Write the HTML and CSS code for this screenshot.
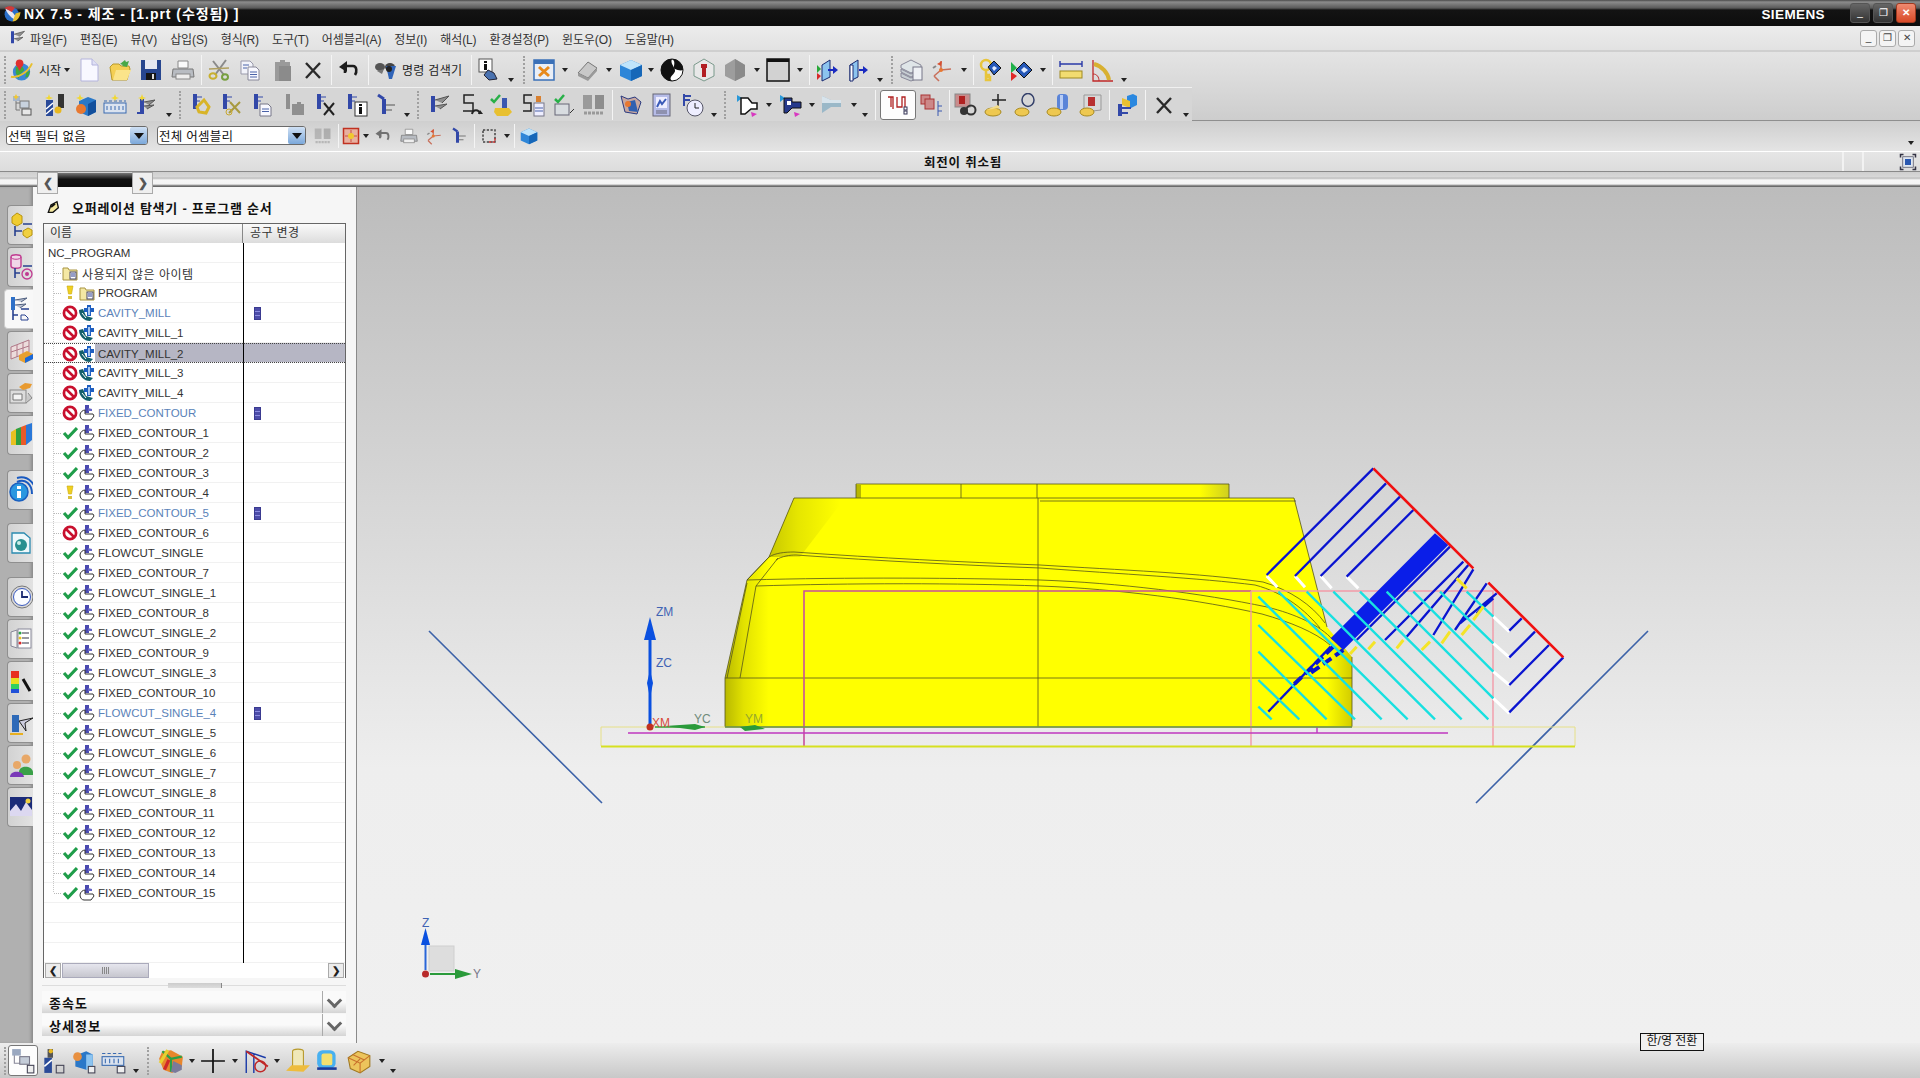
FILE: index.html
```html
<!DOCTYPE html>
<html lang="ko">
<head>
<meta charset="utf-8">
<title>NX 7.5 - 제조</title>
<link rel="stylesheet" href="styles.css">
</head>
<body>
<svg class="sprite" aria-hidden="true">
<symbol id="logo" viewBox="0 0 24 24"><circle cx="11" cy="13" r="9" fill="#2a6ec8"/><path d="M3 6c6 1 12 5 14 14-5-1-11-6-14-14z" fill="#e8e8f4"/><path d="M2 5c4-3 10-3 13 0l-4 5z" fill="#d03a3a"/><path d="M12 22c6 0 10-6 10-12l-6 2z" fill="#e8c030"/></symbol>
<symbol id="globe" viewBox="0 0 24 24"><circle cx="12" cy="14" r="9" fill="#3a86d8"/><path d="M6 9l6-2 3 5-4 4-2 5-3-6zM17 14l4-1-2 6-3 1z" fill="#3fa83f"/><path d="M1 19C8 21 19 14 23 5" fill="none" stroke="#e8c030" stroke-width="2"/><circle cx="10" cy="5" r="4" fill="#e03030"/><path d="M7 7l3 6 3-6z" fill="#e03030"/></symbol>
<symbol id="doc" viewBox="0 0 24 24"><path d="M4 1h11l6 6v16H4z" fill="#f8f8ff" stroke="#b4b4dc"/><path d="M15 1v6h6" fill="#dfe0f4" stroke="#b4b4dc"/></symbol>
<symbol id="folder" viewBox="0 0 24 24"><path d="M2 9l3-3h6l2 2h8l1 3-3 11H4z" fill="#f4cf54" stroke="#b89a2c"/><path d="M5 22l3-10h15l-4 10z" fill="#fbe48a"/><path d="M12 6l5-4 1 2 3-1-2 6-5-1 1-1z" fill="#48a848"/></symbol>
<symbol id="save" viewBox="0 0 24 24"><rect x="2" y="2" width="20" height="20" fill="#27468f"/><rect x="6" y="2" width="12" height="9" fill="#e6e8f2"/><rect x="7" y="15" width="10" height="7" fill="#151515"/><rect x="13" y="16" width="2" height="5" fill="#ddd"/></symbol>
<symbol id="print" viewBox="0 0 24 24"><path d="M7 3h10v7H7z" fill="#fafafa" stroke="#888"/><path d="M2 11h20l1 8H1z" fill="#b8bcc2" stroke="#777"/><rect x="5" y="16" width="14" height="5" fill="#eee" stroke="#888"/></symbol>
<symbol id="cut" viewBox="0 0 24 24"><path d="M19 2L8 17M6 3l11 14" stroke="#8a8a8a" stroke-width="2" fill="none"/><ellipse cx="6" cy="18" rx="3.5" ry="2.8" fill="none" stroke="#c8b030" stroke-width="2"/><ellipse cx="18" cy="19" rx="3" ry="2.8" fill="none" stroke="#78a040" stroke-width="2"/><path d="M2 11l20-1" stroke="#b0a060" stroke-width="1.4"/></symbol>
<symbol id="copy" viewBox="0 0 24 24"><path d="M3 3h9l3 3v10H3z" fill="#f2f3fa" stroke="#99a"/><path d="M10 9h8l3 3v10H10z" fill="#f8f8ff" stroke="#889"/><path d="M12 14h7M12 16.500h7M12 19h7M5 7h6M5 10h4" stroke="#4a62a8"/></symbol>
<symbol id="paste" viewBox="0 0 24 24"><path d="M5 4h5V2h5v2h5v19H5z" fill="#9a9a9a"/><rect x="9" y="8" width="12" height="15" fill="#8b8b8b"/></symbol>
<symbol id="x" viewBox="0 0 24 24"><path d="M5 5l14 15M19 5L5 20" stroke="#2a2a2a" stroke-width="2.400"/></symbol>
<symbol id="undo" viewBox="0 0 24 24"><path d="M8 18V11h8c4 0 4 6 2 9" transform="translate(0 -3)" fill="none" stroke="#1c1c1c" stroke-width="2.600"/><path d="M2 9l8-6v11z" fill="#1c1c1c"/></symbol>
<symbol id="binoc" viewBox="0 0 24 24"><ellipse cx="6" cy="9" rx="5" ry="4" fill="#555"/><ellipse cx="16" cy="9" rx="5" ry="4" fill="#444"/><path d="M12 8h10l-4 13h-3z" fill="#3064b8"/><circle cx="15" cy="11" r="3" fill="#222"/><path d="M3 13l5 3 2-5z" fill="#777"/></symbol>
<symbol id="info" viewBox="0 0 24 24"><rect x="3" y="1" width="13" height="13" fill="#fff" stroke="#555"/><rect x="8" y="3" width="3" height="2" fill="#111"/><rect x="8" y="6" width="3" height="6" fill="#111"/><path d="M12 12l6 3 3 6-8 1-5-5z" fill="#4a72b0" stroke="#223"/></symbol>
<symbol id="sheet" viewBox="0 0 24 24"><rect x="2" y="2" width="20" height="20" fill="#e9eef6" stroke="#3a70b8" stroke-width="1.500"/><rect x="2" y="2" width="20" height="4" fill="#3a70b8"/><path d="M7 9l10 9M17 9L7 18" stroke="#e88a1c" stroke-width="3"/></symbol>
<symbol id="snap" viewBox="0 0 24 24"><rect x="2" y="2" width="20" height="20" fill="#e8b0a0" stroke="#c03020" stroke-width="2"/><path d="M12 4v16M4 12h16" stroke="#c03020"/><circle cx="12" cy="12" r="4" fill="#f0c830"/></symbol>
<symbol id="dsel" viewBox="0 0 24 24"><rect x="4" y="4" width="16" height="16" fill="none" stroke="#444" stroke-width="2" stroke-dasharray="3 2"/><path d="M12 20h8v-6" fill="none" stroke="#c83030" stroke-width="2" stroke-dasharray="3 2"/></symbol>
<symbol id="fit" viewBox="0 0 24 24"><path d="M2 6V2h4M18 2h4v4M2 18v4h4M18 22h4v-4" fill="none" stroke="#334" stroke-width="2"/><rect x="5" y="5" width="14" height="14" fill="#dfe6f0" stroke="#556"/><rect x="8" y="8" width="8" height="8" fill="#2a58b0"/></symbol>
<symbol id="plane" viewBox="0 0 24 24"><path d="M3 15L13 4l9 6-9 10z" fill="#c8c8c8" stroke="#777"/><path d="M3 15l10 5 9-10v3L13 23 3 18z" fill="#9a9a9a"/></symbol>
<symbol id="cube" viewBox="0 0 24 24"><path d="M1 7l11-5 11 5v11l-11 5-11-5z" fill="#2e86d8"/><path d="M1 7l11-5 11 5-11 5z" fill="#bfe4fb"/><path d="M12 12v11l11-5V7z" fill="#1667b8"/></symbol>
<symbol id="shade" viewBox="0 0 24 24"><circle cx="12" cy="12" r="11" fill="#fff" stroke="#111"/><path d="M12 1a11 11 0 0 0 0 22c-5-4 4-7 3-11s-5-7-3-11zM12 1c5 3 0 8 3 10 2 1 6 2 8 1A11 11 0 0 0 12 1z" fill="#111"/></symbol>
<symbol id="hexr" viewBox="0 0 24 24"><path d="M12 1l10 6v11l-10 5-10-5V7z" fill="#e8e8e8" stroke="#7b9a8c"/><path d="M9 6h6v4h-1v9h-4v-9H9z" fill="#b21f24"/></symbol>
<symbol id="hexg" viewBox="0 0 24 24"><path d="M12 1l10 6v11l-10 5-10-5V7z" fill="#9d9d9d"/><path d="M12 1v22l10-5V7z" fill="#8a8a8a"/></symbol>
<symbol id="rect" viewBox="0 0 24 24"><rect x="1" y="1" width="22" height="22" fill="#d2d2d2" stroke="#111" stroke-width="1.500"/><rect x="1" y="1" width="22" height="3" fill="#111"/></symbol>
<symbol id="pin" viewBox="0 0 24 24"><path d="M7 7l8-5v17l-8 4z" fill="#8cc4ef" stroke="#1a2a70"/><path d="M2 7l4 4-4 4z" fill="#28a838"/><path d="M2 15l4 3-4 4z" fill="#d82828"/><path d="M13 12h6" stroke="#1a2ac0" stroke-width="2"/><path d="M18 8l5 4-5 4z" fill="#1a2ac0"/></symbol>
<symbol id="pout" viewBox="0 0 24 24"><path d="M4 7l8-5v17l-8 4z" fill="#8cc4ef" stroke="#1a2a70"/><path d="M4 7h3v16H4z" fill="#fff" stroke="#1a2a70"/><path d="M13 12h5" stroke="#1a2ac0" stroke-width="2"/><path d="M17 8l5 4-5 4z" fill="#1a2ac0"/></symbol>
<symbol id="stack" viewBox="0 0 24 24"><path d="M2 7l10-5 10 5v3L12 15 2 10z" fill="#dfe5e8" stroke="#889"/><path d="M2 11l10 5 10-5v3l-10 5-10-5zM2 15l10 5 10-5v4l-10 4-10-4z" fill="#c8cfd4" stroke="#889"/><rect x="14" y="9" width="9" height="13" fill="#eef0f4" stroke="#778"/></symbol>
<symbol id="axes" viewBox="0 0 24 24"><path d="M11 12v-9M11 12l10-1M11 12l-7 6M4 18l5 5" stroke="#c8705c" stroke-width="1.600" fill="none"/><circle cx="11" cy="12" r="2" fill="#e87830"/><path d="M7 6l5-3-1 5z" fill="#d85030"/><path d="M3 10l3-2" stroke="#888" stroke-width="2"/></symbol>
<symbol id="key" viewBox="0 0 24 24"><circle cx="8" cy="7" r="5" fill="none" stroke="#e8c53c" stroke-width="2.500"/><path d="M8 12v10h4v-3h-2v-2h2" fill="none" stroke="#e8c53c" stroke-width="2.500"/><path d="M10 9l6-6 7 7-7 7z" fill="#2558b8" stroke="#111"/><path d="M14 10l2-2 3 2-3 3z" fill="#dfeaff"/></symbol>
<symbol id="diam" viewBox="0 0 24 24"><path d="M2 4l6 6-6 5z" fill="#1fb048"/><path d="M2 14l6 4-6 5z" fill="#e02828"/><path d="M7 12l8-8 8 8-8 8z" fill="#2558b8" stroke="#111"/><path d="M12 12l3-3 4 3-4 3z" fill="#dfeaff"/></symbol>
<symbol id="ruler" viewBox="0 0 24 24"><rect x="1" y="13" width="22" height="7" fill="#f2dc70" stroke="#a08a20"/><path d="M1 6h22M1 3v6M23 3v6" stroke="#2a3aa8" stroke-width="1.400" fill="none"/></symbol>
<symbol id="angle" viewBox="0 0 24 24"><path d="M3 2v21h20" fill="none" stroke="#c02828" stroke-width="1.300"/><path d="M4 6c8 2 14 9 15 16" fill="none" stroke="#d8b030" stroke-width="4"/><path d="M3 16c4 0 6 3 6 7" fill="none" stroke="#c02828"/></symbol>
<symbol id="treea" viewBox="0 0 24 24"><path d="M6 5v12h4M10 10H6" stroke="#777" fill="none"/><rect x="3" y="3" width="7" height="5" fill="#a6b6cc"/><rect x="10" y="8" width="9" height="7" fill="#c8d2de" stroke="#777"/><rect x="12" y="16" width="9" height="6" fill="#e8e8e8" stroke="#555"/><path d="M6 1l1 2 2 1-2 1-1 2-1-2-2-1 2-1z" fill="#f2c830"/></symbol>
<symbol id="mill" viewBox="0 0 24 24"><path d="M4 7h7v16H4z" fill="#2a4a98"/><path d="M4 16l7-6M4 21l7-6" stroke="#fff" stroke-width="1.500"/><path d="M16 1h6v14h-6z" fill="#333"/><circle cx="16" cy="17" r="3.500" fill="#e8b820"/><path d="M7 1l1 3 3 1-3 1-1 1-1-1-3-1 3-1z" fill="#f2d830"/></symbol>
<symbol id="bcube" viewBox="0 0 24 24"><path d="M6 8l9-4 8 3v12l-8 4-9-4z" fill="#2a78c8"/><path d="M15 11v12l8-4V7z" fill="#124f9c"/><circle cx="8" cy="16" r="5" fill="#e87830"/><path d="M7 1l1 3 3 1-3 1-1 2-1-2-3-1 3-1z" fill="#f2d830"/></symbol>
<symbol id="fixt" viewBox="0 0 24 24"><rect x="1" y="10" width="22" height="10" fill="#dbe3ef" stroke="#3a6ab0"/><path d="M4 13v4M8 13v4M12 13v4M16 13v4M20 13v4" stroke="#3a6ab0"/><path d="M1 8h22" stroke="#3a6ab0" stroke-dasharray="3 2"/><path d="M12 1l1 3 3 1-3 1-1 2-1-2-3-1 3-1z" fill="#f2d830"/></symbol>
<symbol id="ops" viewBox="0 0 24 24"><rect x="6" y="6" width="4" height="14" fill="#3248a8"/><path d="M10 9l11-2-6 5M10 13l10-1-7 4" fill="#8b8b8b" stroke="#555"/><path d="M8 1l1 3 3 1-3 1-1 2-1-2-3-1 3-1z" fill="#f2d830"/><path d="M3 20h7" stroke="#3248a8" stroke-width="2"/></symbol>
<symbol id="opb" viewBox="0 0 24 24"><rect x="4" y="1" width="4" height="15" fill="#3248a8"/><path d="M8 4h5M8 8h3" stroke="#3248a8"/></symbol>
<symbol id="opa" viewBox="0 0 24 24"><use href="#opb"/><path d="M15 7l5 7-3 6-7-1-2-5z" fill="none" stroke="#d8b428" stroke-width="3"/></symbol>
<symbol id="opc" viewBox="0 0 24 24"><use href="#opb"/><path d="M10 20L21 9M11 9l10 11" stroke="#a89a40" stroke-width="2"/><circle cx="10" cy="19" r="3" fill="none" stroke="#c8a830"/></symbol>
<symbol id="opd" viewBox="0 0 24 24"><use href="#opb"/><path d="M10 11h8l3 3v9H10z" fill="#f8f8ff" stroke="#778"/><path d="M12 16h7M12 18.500h7" stroke="#4a62a8"/></symbol>
<symbol id="ope" viewBox="0 0 24 24"><rect x="4" y="1" width="4" height="15" fill="#8f8f8f"/><path d="M10 11h5v-2h4v2h3v11H10z" fill="#8f8f8f"/></symbol>
<symbol id="opf" viewBox="0 0 24 24"><use href="#opb"/><path d="M11 10l10 12M21 10L11 22" stroke="#222" stroke-width="2"/></symbol>
<symbol id="opg" viewBox="0 0 24 24"><use href="#opb"/><rect x="11" y="9" width="12" height="14" fill="#fff" stroke="#333"/><rect x="15" y="11" width="3" height="2" fill="#111"/><rect x="15" y="14" width="3" height="7" fill="#111"/></symbol>
<symbol id="oph" viewBox="0 0 24 24"><path d="M4 2l6 4" stroke="#3248a8" stroke-width="3"/><rect x="8" y="6" width="4" height="15" fill="#3248a8"/><path d="M12 12h9M12 17h6" stroke="#555"/></symbol>
<symbol id="opi" viewBox="0 0 24 24"><rect x="4" y="3" width="4" height="16" fill="#3248a8"/><path d="M8 7l14-4-7 7M8 13l12-2-7 5" fill="#8f8f8f" stroke="#555"/></symbol>
<symbol id="sarr" viewBox="0 0 24 24"><path d="M15 2H5v8h9v8H4" fill="none" stroke="#222" stroke-width="1.500"/><path d="M13 21c1-5 7-5 8 0" fill="none" stroke="#222" stroke-width="2"/><path d="M19 21h5l-3-4z" fill="#222"/></symbol>
<symbol id="chk" viewBox="0 0 24 24"><path d="M1 6l3 3 6-7" fill="none" stroke="#28b048" stroke-width="2.500"/><rect x="12" y="5" width="5" height="15" fill="#3a58b0"/><path d="M5 15h14l3 4-4 4H7l-3-4z" fill="#e8c030"/></symbol>
<symbol id="sdoc" viewBox="0 0 24 24"><path d="M11 2H3v8h7v8H2" fill="none" stroke="#222" stroke-width="1.500"/><rect x="13" y="10" width="10" height="13" fill="#eef" stroke="#778"/><path d="M14 15h8M14 18h8" stroke="#4a62a8"/><rect x="15" y="3" width="5" height="6" fill="#d88030"/></symbol>
<symbol id="cdoc" viewBox="0 0 24 24"><path d="M3 6l3 3 6-7" fill="none" stroke="#28b048" stroke-width="2.500"/><rect x="3" y="11" width="14" height="11" fill="#d8dce0" stroke="#667"/><path d="M18 20l4-4" stroke="#333"/></symbol>
<symbol id="gdoc" viewBox="0 0 24 24"><rect x="1" y="2" width="9" height="14" fill="#9a9a9a"/><rect x="13" y="2" width="9" height="14" fill="#8d8d8d"/><path d="M2 20h20" stroke="#999" stroke-width="3" stroke-dasharray="3 1"/></symbol>
<symbol id="cubes" viewBox="0 0 24 24"><path d="M2 3l7 3 7-2 6 5-4 12-12-2z" fill="#c8a8a0" stroke="#2a3a80"/><path d="M8 9l8-2 3 12-9-1z" fill="#3060b0"/><circle cx="9" cy="11" r="3" fill="#e87830"/></symbol>
<symbol id="report" viewBox="0 0 24 24"><rect x="3" y="1" width="17" height="22" fill="#b6bce8" stroke="#667"/><rect x="6" y="4" width="11" height="11" fill="#eef"/><path d="M7 14l3-6 2 3 4-5" stroke="#3a5ab8" stroke-width="2" fill="none"/><path d="M6 18h11M6 20h11" stroke="#667"/></symbol>
<symbol id="opclk" viewBox="0 0 24 24"><path d="M3 1v12M3 3h7M3 7h6" stroke="#3248a8" stroke-width="2"/><circle cx="14" cy="15" r="8" fill="#eef" stroke="#556"/><path d="M14 10v5h4" stroke="#222" fill="none"/></symbol>
<symbol id="tl1" viewBox="0 0 24 24"><path d="M1 2l5 3-5 4z" fill="#2a98d8"/><path d="M5 5h7l4 5h5v6h-6l-6 5H5z" fill="#fff" stroke="#111" stroke-width="1.500"/><path d="M15 19l6 2-5 3z" fill="#d838c0"/></symbol>
<symbol id="tl2" viewBox="0 0 24 24"><path d="M1 2l5 3-5 4z" fill="#2a98d8"/><path d="M5 5h8v4h9v6h-9l-5 5H5z" fill="#263a8c" stroke="#111"/><path d="M8 8h4v4H8z" fill="#fff"/><path d="M15 19l6 2-5 3z" fill="#d838c0"/></symbol>
<symbol id="tl3" viewBox="0 0 24 24"><path d="M2 3l9 4h10v7H11l-9 6z" fill="#9ab8c8"/><path d="M2 3l9 4h10v3H2z" fill="#d8e4ec"/></symbol>
<symbol id="seq" viewBox="0 0 24 24"><path d="M2 4h5v12M5 4v10M11 4v10h5V4h3v10" fill="none" stroke="#b02020" stroke-width="1.300"/><rect x="18" y="14" width="3" height="3" fill="none" stroke="#335"/><rect x="18" y="18" width="3" height="3" fill="none" stroke="#335"/></symbol>
<symbol id="seq2" viewBox="0 0 24 24"><rect x="1" y="2" width="9" height="9" fill="#c88" stroke="#a33"/><rect x="5" y="6" width="9" height="10" fill="#c88" stroke="#a33"/><path d="M18 8v15M18 13h4M18 18h4" stroke="#3a58b0"/></symbol>
<symbol id="mach" viewBox="0 0 24 24"><rect x="2" y="1" width="15" height="13" fill="#c88c8c" stroke="#888"/><rect x="6" y="3" width="6" height="8" fill="#b02020"/><circle cx="11" cy="18" r="4" fill="#333"/><circle cx="18" cy="17" r="4.500" fill="none" stroke="#333" stroke-width="2"/></symbol>
<symbol id="plus" viewBox="0 0 24 24"><path d="M14 1v12M8 7h14" stroke="#222" stroke-width="1.500"/><ellipse cx="9" cy="19" rx="8" ry="4" fill="#eec850" stroke="#a88a20"/><path d="M2 17l12-5 2 3" fill="#f4dc88"/></symbol>
<symbol id="ring" viewBox="0 0 24 24"><ellipse cx="14" cy="7" rx="6" ry="6.500" fill="none" stroke="#34406a" stroke-width="1.500"/><ellipse cx="8" cy="19" rx="7" ry="4" fill="#eec850" stroke="#a88a20"/></symbol>
<symbol id="cyl" viewBox="0 0 24 24"><rect x="11" y="1" width="11" height="16" rx="4" fill="#5a84d8"/><rect x="14" y="2" width="3" height="14" fill="#b8ccf4"/><ellipse cx="8" cy="19" rx="7" ry="4" fill="#eec850" stroke="#a88a20"/></symbol>
<symbol id="cbox" viewBox="0 0 24 24"><path d="M5 2h17v15l-17 2z" fill="#d8d8d8" stroke="#999"/><rect x="9" y="4" width="7" height="9" fill="#b83030"/><ellipse cx="8" cy="19" rx="7" ry="4" fill="#eec850" stroke="#a88a20"/></symbol>
<symbol id="opcube" viewBox="0 0 24 24"><path d="M13 3l6-2 4 2v9l-6 3-4-3z" fill="#2a88e0"/><path d="M8 5l8 3v7l-8-3z" fill="#e8c030"/><rect x="4" y="11" width="4" height="12" fill="#3248a8"/><path d="M8 15h9M8 20h6" stroke="#3248a8" stroke-width="2"/></symbol>
<symbol id="mult" viewBox="0 0 24 24"><path d="M1 10l3-7 8-1 11 6-1 9-9 6-8-3z" fill="#e8862c"/><path d="M4 3l8 7v12M12 10l10-2" stroke="#2aa048" stroke-width="2" fill="none"/><path d="M6 20l4-9" stroke="#d02828" stroke-width="3"/><path d="M14 12l8 4v4l-6 3-4-1z" fill="#7a7a9a"/><path d="M2 14l7-12" stroke="#e8d030" stroke-width="3"/></symbol>
<symbol id="cross" viewBox="0 0 24 24"><path d="M12 1v22M1 12h22" stroke="#111" stroke-width="1.600"/></symbol>
<symbol id="poly" viewBox="0 0 24 24"><path d="M3 23V3l18 6M10 23V6" fill="none" stroke="#1a3aa8" stroke-width="1.300"/><path d="M3 3l20 14" stroke="#c02828" stroke-width="1.600"/><circle cx="16" cy="17" r="5" fill="none" stroke="#c02828" stroke-width="1.400"/></symbol>
<symbol id="cylb" viewBox="0 0 24 24"><path d="M7 3a5 2 0 0 1 10 0v14H7z" fill="#f0e8b8" stroke="#b89a2c"/><path d="M1 21l5-5h17l-6 6z" fill="#eebc3c"/></symbol>
<symbol id="cubeb" viewBox="0 0 24 24"><rect x="2" y="2" width="17" height="17" rx="5" fill="#48b0f0"/><rect x="6" y="5" width="10" height="11" rx="2" fill="#f4e070"/><path d="M2 19h18" stroke="#1a3a98" stroke-width="2.400"/></symbol>
<symbol id="wire" viewBox="0 0 24 24"><path d="M2 9l9-6 11 4v10l-9 6-9-4z" fill="#ecc45c" stroke="#a07820"/><path d="M2 9l11 5 9-7M13 14v9M6 6l11 5M7 16l6-6" stroke="#c8702c" fill="none"/></symbol>
<symbol id="tree2" viewBox="0 0 24 24"><path d="M4 6v8h8" stroke="#889" fill="none"/><rect x="2" y="1" width="8" height="6" fill="#9aa8c0"/><rect x="9" y="8" width="9" height="7" fill="#c4ccd8" stroke="#778"/><rect x="16" y="16" width="6" height="7" fill="#eee" stroke="#445"/></symbol>
<symbol id="mill2" viewBox="0 0 24 24"><path d="M4 9h7v14H4z" fill="#2a4a98"/><path d="M4 17l7-6" stroke="#fff" stroke-width="1.500"/><rect x="7" y="1" width="5" height="8" fill="#555"/><circle cx="10" cy="3" r="2" fill="#e8b820"/><rect x="15" y="16" width="7" height="7" fill="none" stroke="#445"/></symbol>
<symbol id="cube2" viewBox="0 0 24 24"><path d="M4 7l10-4 6 3v11l-6 3-10-3z" fill="#2a78c8"/><path d="M14 6v14l6-3V6z" fill="#8cc4f0"/><circle cx="6" cy="8" r="4" fill="#e89040"/><rect x="16" y="17" width="6" height="6" fill="#eee" stroke="#445"/></symbol>
<symbol id="fix2" viewBox="0 0 24 24"><rect x="1" y="8" width="20" height="8" fill="#dbe3ef" stroke="#3a6ab0"/><path d="M4 10v4M8 10v4M12 10v4M16 10v4" stroke="#3a6ab0"/><path d="M1 5h20" stroke="#3a6ab0" stroke-dasharray="3 2"/><rect x="15" y="17" width="7" height="6" fill="#eee" stroke="#445"/></symbol>
<symbol id="t1" viewBox="0 0 24 28"><path d="M3 6l5-4 5 3v7l-5 3-5-3z" fill="#f0cc30" stroke="#b89410"/><path d="M6 15v10M6 20h7M14 13h9" stroke="#27408f" stroke-width="1.600" fill="none"/><path d="M14 20l5-3 4 2v5l-5 3-4-3z" fill="#f0d040" stroke="#b89410"/></symbol>
<symbol id="t2" viewBox="0 0 24 28"><path d="M2 4c0-3 10-3 10 0v9c0 3-10 3-10 0z" fill="#f0d8e8" stroke="#c03a90" stroke-width="1.400"/><path d="M2 4c0 3 10 3 10 0" fill="none" stroke="#c03a90"/><path d="M6 15v10M6 20h5M14 13h9" stroke="#27408f" stroke-width="1.600" fill="none"/><circle cx="18" cy="21" r="5" fill="none" stroke="#c03a90" stroke-width="1.300"/><circle cx="18" cy="21" r="2" fill="#c03a90"/></symbol>
<symbol id="t2b" viewBox="0 0 24 28"><rect x="4" y="2" width="4" height="13" fill="#2e70c8"/><path d="M8 5l12-2-6 4M8 10l11-1-6 4" fill="#b8c0d0" stroke="#506080"/><path d="M6 15v10M6 20h5M14 14h8" stroke="#27408f" stroke-width="1.600" fill="none"/><path d="M14 25v-5h4l3 3v2z" fill="none" stroke="#27408f"/></symbol>
<symbol id="t3" viewBox="0 0 24 28"><path d="M2 10L20 3v12L2 22z" fill="#ecdcdc" stroke="#b07888"/><path d="M8 8v12M14 5v12M2 15l18-6" stroke="#b07888"/><path d="M10 18l8-4 6 3v5l-8 4-6-3z" fill="#e8a030"/><path d="M16 21l8-4v5l-8 4z" fill="#1a68d8"/></symbol>
<symbol id="t3b" viewBox="0 0 24 28"><rect x="1" y="11" width="16" height="13" fill="#dcdcdc" stroke="#888"/><path d="M4 15h9v6H4z" fill="#f4f4f4" stroke="#777"/><path d="M17 24l6-5-4-5" fill="#c8c8c8" stroke="#888"/><path d="M10 8l6-4 7 1-2 4-7 2z" fill="#e89a30"/></symbol>
<symbol id="t4" viewBox="0 0 24 28"><path d="M2 11l5-3v16H2z" fill="#e8c020"/><path d="M7 8l5-2v18H7z" fill="#30a040"/><path d="M12 6l5-2v20h-5z" fill="#e85a28"/><path d="M17 4l6-2v17l-6 5z" fill="#2a78d8"/></symbol>
<symbol id="t5" viewBox="0 0 24 28"><path d="M8 6c8-4 15 2 15 12" fill="none" stroke="#1a5ac0" stroke-width="2"/><path d="M8 2c11-3 20 6 19 18" fill="none" stroke="#1a5ac0" stroke-width="2"/><circle cx="10" cy="16" r="9" fill="#2a98e0" stroke="#1a60c0" stroke-width="1.500"/><rect x="8" y="15" width="4" height="7" fill="#fff"/><rect x="8" y="10" width="4" height="3" fill="#fff"/></symbol>
<symbol id="t6" viewBox="0 0 24 28"><path d="M3 4h12l6 5v15H3z" fill="#eef8fb" stroke="#2a8ab0" stroke-width="1.300"/><circle cx="12" cy="16" r="6" fill="#2a9090"/><circle cx="10" cy="14" r="2" fill="#c8eee8"/></symbol>
<symbol id="t7" viewBox="0 0 24 24"><circle cx="13" cy="12" r="11" fill="#d8d8d8" stroke="#777"/><circle cx="13" cy="12" r="8.500" fill="#fafcff" stroke="#3a5ac0"/><path d="M13 6v6h6" stroke="#1a2a70" stroke-width="1.800" fill="none"/></symbol>
<symbol id="t8" viewBox="0 0 24 24"><path d="M2 5l6-2v18l-6-2z" fill="#eee" stroke="#889"/><rect x="9" y="2" width="13" height="19" fill="#fff" stroke="#889"/><path d="M13 6h7M13 11h7M13 16h7" stroke="#334"/><circle cx="11" cy="6" r="1.500" fill="#28a048"/><circle cx="11" cy="11" r="1.500" fill="#e8c020"/><circle cx="11" cy="16" r="1.500" fill="#d82828"/></symbol>
<symbol id="t9" viewBox="0 0 24 28"><rect x="2" y="4" width="8" height="7" fill="#e83020"/><rect x="2" y="11" width="8" height="6" fill="#e8e020"/><rect x="2" y="17" width="8" height="5" fill="#30d060"/><rect x="2" y="22" width="8" height="4" fill="#2050d8"/><path d="M14 12l7 12" stroke="#111" stroke-width="3"/></symbol>
<symbol id="t10" viewBox="0 0 24 28"><path d="M3 6h7v17H3z" fill="#2e6ab8"/><path d="M1 25h13" stroke="#e8b020" stroke-width="2"/><path d="M10 12l14-3-8 5 1 8z" fill="#ccd" stroke="#222"/></symbol>
<symbol id="t11" viewBox="0 0 24 28"><circle cx="17" cy="8" r="4.500" fill="#e8a868"/><path d="M10 21c0-7 13-7 14 0v3H10z" fill="#3aa048"/><circle cx="8" cy="14" r="4" fill="#e8a868"/><path d="M1 26c0-7 13-7 14 0z" fill="#7a3ab8"/></symbol>
<symbol id="t12" viewBox="0 0 24 28"><rect x="1" y="4" width="22" height="19" fill="#1a2a78"/><path d="M1 18l6-7 5 7 5-9 6 8v6H1z" fill="#dcd8f0"/><circle cx="19" cy="8" r="2.500" fill="#f0d040"/></symbol>
<symbol id="picon" viewBox="0 0 24 24"><path d="M5 20l4-11 9-5 2 9-8 7z" fill="#f4e8a0" stroke="#111" stroke-width="2"/><path d="M9 12l6-5" stroke="#111" stroke-width="3"/></symbol>
<symbol id="no" viewBox="0 0 16 16"><circle cx="8" cy="8" r="6.100" fill="#fff" stroke="#c8102e" stroke-width="2.700"/><path d="M4 4l8 8" stroke="#c8102e" stroke-width="2.500"/></symbol>
<symbol id="ok" viewBox="0 0 16 16"><path d="M2 8l4 4.500L15 3" fill="none" stroke="#1f9d4a" stroke-width="3.200"/></symbol>
<symbol id="bulb" viewBox="0 0 16 16"><path d="M5 1h6l-1.500 8h-3z" fill="#f0d020" stroke="#c8a810" stroke-width=".6"/><rect x="6" y="11" width="4" height="3" fill="#d8c040"/></symbol>
<symbol id="fld" viewBox="0 0 16 16"><path d="M1 5V3h5l1 2h8v10H1z" fill="#f4e8a4" stroke="#a89440"/><rect x="8" y="7" width="6" height="7" fill="#fff" stroke="#446"/><path d="M9 9h4M9 11h4" stroke="#2a3a90"/></symbol>
<symbol id="cav" viewBox="0 0 16 16"><path d="M0 5c0 6 5 11 11 11l3-3-7-2-3-7z" fill="#14606a"/><path d="M5 3h3V0h4v3h3v4h-3v4H8V7H5z" fill="#1f5fc0"/><path d="M9 2h2v8H9z" fill="#a8c8f0"/><path d="M3 8l4 5" stroke="#fff"/></symbol>
<symbol id="fix" viewBox="0 0 16 16"><rect x="6" y="0" width="4" height="8" fill="#4a4ab0"/><path d="M9 3l4 1v2H9z" fill="#6868c8"/><path d="M1 10c0-3 3-5 5-5v4h8l1 2-3 4H5c-2 0-4-2-4-5z" fill="#fff" stroke="#333"/></symbol>
</svg>

<div class="app">
  <header class="titlebar">
    <svg class="tlogo"><use href="#logo"/></svg>
    <span class="ttext">NX 7.5 - 제조 - [1.prt (수정됨) ]</span>
    <span class="siemens">SIEMENS</span>
    <div class="winbtns"><span class="wb">_</span><span class="wb">❐</span><span class="wb wbclose">✕</span></div>
  </header>

  <nav class="menubar">
    <svg class="mlogo"><use href="#opi"/></svg>
    <span>파일(F)</span><span>편집(E)</span><span>뷰(V)</span><span>삽입(S)</span><span>형식(R)</span><span>도구(T)</span><span>어셈블리(A)</span><span>정보(I)</span><span>해석(L)</span><span>환경설정(P)</span><span>윈도우(O)</span><span>도움말(H)</span>
    <div class="mdibtns"><span class="mb">_</span><span class="mb">❐</span><span class="mb">✕</span></div>
  </nav>

  <div class="tools">
    <div class="tbar tbar1">
      <i class="dots w10"></i>
      <i class="ti w23"><svg><use href="#globe"/></svg></i>
      <span class="tlabel start w28">시작</span><i class="ar w12"></i>
      <i class="ti w31"><svg><use href="#doc"/></svg></i>
      <i class="ti w31"><svg><use href="#folder"/></svg></i>
      <i class="ti w32"><svg><use href="#save"/></svg></i>
      <i class="ti w32"><svg><use href="#print"/></svg></i>
      <i class="sep w4"></i>
      <i class="ti w31"><svg><use href="#cut"/></svg></i>
      <i class="ti w32"><svg><use href="#copy"/></svg></i>
      <i class="ti w31"><svg><use href="#paste"/></svg></i>
      <i class="ti w31"><svg><use href="#x"/></svg></i>
      <i class="sep w5"></i>
      <i class="ti w32"><svg><use href="#undo"/></svg></i>
      <i class="sep w5"></i>
      <i class="ti w32"><svg><use href="#binoc"/></svg></i>
      <span class="tlabel w66">명령 검색기</span>
      <i class="sep w5"></i>
      <i class="ti w30"><svg><use href="#info"/></svg></i><i class="ar low w16"></i>
      <i class="dots w12"></i>
      <i class="ti w26"><svg><use href="#sheet"/></svg></i><i class="ar w15"></i>
      <i class="ti w30"><svg><use href="#plane"/></svg></i><i class="ar w14"></i>
      <i class="ti w30"><svg><use href="#cube"/></svg></i><i class="ar w10"></i>
      <i class="ti w32"><svg><use href="#shade"/></svg></i>
      <i class="ti w31"><svg><use href="#hexr"/></svg></i>
      <i class="ti w32"><svg><use href="#hexg"/></svg></i><i class="ar w12"></i>
      <i class="ti w30"><svg><use href="#rect"/></svg></i><i class="ar w14"></i>
      <i class="sep w4"></i>
      <i class="ti w32"><svg><use href="#pin"/></svg></i>
      <i class="ti w30"><svg><use href="#pout"/></svg></i><i class="ar low w14"></i>
      <i class="dots w9"></i>
      <i class="ti w30"><svg><use href="#stack"/></svg></i>
      <i class="ti w31"><svg><use href="#axes"/></svg></i><i class="ar w14"></i>
      <i class="sep w4"></i>
      <i class="ti w30"><svg><use href="#key"/></svg></i>
      <i class="ti w32"><svg><use href="#diam"/></svg></i><i class="ar w12"></i>
      <i class="sep w6"></i>
      <i class="ti w32"><svg><use href="#ruler"/></svg></i>
      <i class="ti w30"><svg><use href="#angle"/></svg></i><i class="ar low w14"></i>
    </div>
    <div class="tbar tbar2">
      <i class="dots w7"></i>
      <i class="ti w30"><svg><use href="#treea"/></svg></i>
      <i class="ti w33"><svg><use href="#mill"/></svg></i>
      <i class="ti w30"><svg><use href="#bcube"/></svg></i>
      <i class="ti w30"><svg><use href="#fixt"/></svg></i>
      <i class="ti w32"><svg><use href="#ops"/></svg></i><i class="ar low w13"></i>
      <i class="dots w10"></i>
      <i class="ti w31"><svg><use href="#opa"/></svg></i>
      <i class="ti w30"><svg><use href="#opc"/></svg></i>
      <i class="ti w31"><svg><use href="#opd"/></svg></i>
      <i class="ti w33"><svg><use href="#ope"/></svg></i>
      <i class="ti w30"><svg><use href="#opf"/></svg></i>
      <i class="ti w31"><svg><use href="#opg"/></svg></i>
      <i class="ti w30"><svg><use href="#oph"/></svg></i><i class="ar low w12"></i>
      <i class="dots w9"></i>
      <i class="ti w33"><svg><use href="#opi"/></svg></i>
      <i class="ti w32"><svg><use href="#sarr"/></svg></i>
      <i class="ti w30"><svg><use href="#chk"/></svg></i>
      <i class="ti w31"><svg><use href="#sdoc"/></svg></i>
      <i class="ti w31"><svg><use href="#cdoc"/></svg></i>
      <i class="ti w30"><svg><use href="#gdoc"/></svg></i>
      <i class="sep w6"></i>
      <i class="ti w31"><svg><use href="#cubes"/></svg></i>
      <i class="ti w32"><svg><use href="#report"/></svg></i>
      <i class="ti w30"><svg><use href="#opclk"/></svg></i><i class="ar low w12"></i>
      <i class="dots w13"></i>
      <i class="ti w30"><svg><use href="#tl1"/></svg></i><i class="ar w12"></i>
      <i class="ti w31"><svg><use href="#tl2"/></svg></i><i class="ar w11"></i>
      <i class="ti w30"><svg><use href="#tl3"/></svg></i><i class="ar w13"></i><i class="ar low w10"></i>
      <i class="sep w10"></i>
      <i class="ti w36 active"><svg><use href="#seq"/></svg></i>
      <i class="ti w31"><svg><use href="#seq2"/></svg></i>
      <i class="sep w3"></i>
      <i class="ti w30"><svg><use href="#mach"/></svg></i>
      <i class="ti w31"><svg><use href="#plus"/></svg></i>
      <i class="ti w30"><svg><use href="#ring"/></svg></i>
      <i class="ti w34"><svg><use href="#cyl"/></svg></i>
      <i class="ti w31"><svg><use href="#cbox"/></svg></i>
      <i class="sep w5"></i>
      <i class="ti w30"><svg><use href="#opcube"/></svg></i>
      <i class="sep w8"></i>
      <i class="ti w30"><svg><use href="#x"/></svg></i><i class="ar low w13"></i>
    </div>
  </div>

  <div class="selbar">
    <div class="combo combo1"><span>선택 필터 없음</span><b class="cbtn"></b></div>
    <div class="combo combo2"><span>전체 어셈블리</span><b class="cbtn"></b></div>
    <i class="ti w26 sm faded"><svg><use href="#gdoc"/></svg></i>
    <i class="sep w4"></i>
    <i class="ti w22 sm"><svg><use href="#snap"/></svg></i><i class="ar w8"></i>
    <i class="ti w26 sm faded"><svg><use href="#undo"/></svg></i>
    <i class="ti w26 sm"><svg><use href="#print"/></svg></i>
    <i class="ti w23 sm"><svg><use href="#axes"/></svg></i>
    <i class="ti w27 sm"><svg><use href="#oph"/></svg></i>
    <i class="sep w4"></i>
    <i class="ti w26 sm"><svg><use href="#dsel"/></svg></i><i class="ar w10"></i>
    <i class="sep w4"></i>
    <i class="ti w26 sm"><svg><use href="#cube"/></svg></i>
    <i class="ar endarrow"></i>
  </div>

  <div class="status">
    <span class="smsg">회전이 취소됨</span>
    <i class="svline"></i><i class="svline"></i>
    <svg class="sicon"><use href="#fit"/></svg>
  </div>

  <div class="strip">
    <div class="tabscroll"><span class="tsb">&#10094;</span><span class="tsthumb"></span><span class="tsb">&#10095;</span></div>
  </div>

  <div class="main">
    <aside class="rail">
      <div class="tab"><svg><use href="#t1"/></svg></div>
      <div class="tab"><svg><use href="#t2"/></svg></div>
      <div class="tab active"><svg><use href="#t2b"/></svg></div>
      <div class="tab"><svg><use href="#t3"/></svg></div>
      <div class="tab"><svg><use href="#t3b"/></svg></div>
      <div class="tab"><svg><use href="#t4"/></svg></div>
      <div class="tab g15"><svg><use href="#t5"/></svg></div>
      <div class="tab g13"><svg><use href="#t6"/></svg></div>
      <div class="tab g14"><svg><use href="#t7"/></svg></div>
      <div class="tab"><svg><use href="#t8"/></svg></div>
      <div class="tab"><svg><use href="#t9"/></svg></div>
      <div class="tab"><svg><use href="#t10"/></svg></div>
      <div class="tab"><svg><use href="#t11"/></svg></div>
      <div class="tab"><svg><use href="#t12"/></svg></div>
    </aside>

    <section class="panel">
      <div class="ptitle"><svg><use href="#picon"/></svg><span>오퍼레이션 탐색기 - 프로그램 순서</span></div>
      <div class="table">
        <div class="thead"><div class="th1">이름</div><div class="th2">공구 변경</div></div>
        <div class="row"><div class="name root">NC_PROGRAM</div><div class="chg"></div></div>
        <div class="row"><div class="name ind"><svg class="ic"><use href="#fld"/></svg><span class="lbl tight">사용되지 않은 아이템</span></div><div class="chg"></div></div>
        <div class="row"><div class="name ind"><svg class="ic"><use href="#bulb"/></svg><svg class="ic"><use href="#fld"/></svg><span class="lbl">PROGRAM</span></div><div class="chg"></div></div>
        <div class="row"><div class="name ind"><svg class="ic"><use href="#no"/></svg><svg class="ic"><use href="#cav"/></svg><span class="lbl blue">CAVITY_MILL</span></div><div class="chg"><b class="mark"></b></div></div>
        <div class="row"><div class="name ind"><svg class="ic"><use href="#no"/></svg><svg class="ic"><use href="#cav"/></svg><span class="lbl">CAVITY_MILL_1</span></div><div class="chg"></div></div>
        <div class="row selected"><div class="name ind"><svg class="ic"><use href="#no"/></svg><svg class="ic"><use href="#cav"/></svg><span class="lbl">CAVITY_MILL_2</span></div><div class="chg"></div></div>
        <div class="row"><div class="name ind"><svg class="ic"><use href="#no"/></svg><svg class="ic"><use href="#cav"/></svg><span class="lbl">CAVITY_MILL_3</span></div><div class="chg"></div></div>
        <div class="row"><div class="name ind"><svg class="ic"><use href="#no"/></svg><svg class="ic"><use href="#cav"/></svg><span class="lbl">CAVITY_MILL_4</span></div><div class="chg"></div></div>
        <div class="row"><div class="name ind"><svg class="ic"><use href="#no"/></svg><svg class="ic"><use href="#fix"/></svg><span class="lbl blue">FIXED_CONTOUR</span></div><div class="chg"><b class="mark"></b></div></div>
        <div class="row"><div class="name ind"><svg class="ic"><use href="#ok"/></svg><svg class="ic"><use href="#fix"/></svg><span class="lbl">FIXED_CONTOUR_1</span></div><div class="chg"></div></div>
        <div class="row"><div class="name ind"><svg class="ic"><use href="#ok"/></svg><svg class="ic"><use href="#fix"/></svg><span class="lbl">FIXED_CONTOUR_2</span></div><div class="chg"></div></div>
        <div class="row"><div class="name ind"><svg class="ic"><use href="#ok"/></svg><svg class="ic"><use href="#fix"/></svg><span class="lbl">FIXED_CONTOUR_3</span></div><div class="chg"></div></div>
        <div class="row"><div class="name ind"><svg class="ic"><use href="#bulb"/></svg><svg class="ic"><use href="#fix"/></svg><span class="lbl">FIXED_CONTOUR_4</span></div><div class="chg"></div></div>
        <div class="row"><div class="name ind"><svg class="ic"><use href="#ok"/></svg><svg class="ic"><use href="#fix"/></svg><span class="lbl blue">FIXED_CONTOUR_5</span></div><div class="chg"><b class="mark"></b></div></div>
        <div class="row"><div class="name ind"><svg class="ic"><use href="#no"/></svg><svg class="ic"><use href="#fix"/></svg><span class="lbl">FIXED_CONTOUR_6</span></div><div class="chg"></div></div>
        <div class="row"><div class="name ind"><svg class="ic"><use href="#ok"/></svg><svg class="ic"><use href="#fix"/></svg><span class="lbl">FLOWCUT_SINGLE</span></div><div class="chg"></div></div>
        <div class="row"><div class="name ind"><svg class="ic"><use href="#ok"/></svg><svg class="ic"><use href="#fix"/></svg><span class="lbl">FIXED_CONTOUR_7</span></div><div class="chg"></div></div>
        <div class="row"><div class="name ind"><svg class="ic"><use href="#ok"/></svg><svg class="ic"><use href="#fix"/></svg><span class="lbl">FLOWCUT_SINGLE_1</span></div><div class="chg"></div></div>
        <div class="row"><div class="name ind"><svg class="ic"><use href="#ok"/></svg><svg class="ic"><use href="#fix"/></svg><span class="lbl">FIXED_CONTOUR_8</span></div><div class="chg"></div></div>
        <div class="row"><div class="name ind"><svg class="ic"><use href="#ok"/></svg><svg class="ic"><use href="#fix"/></svg><span class="lbl">FLOWCUT_SINGLE_2</span></div><div class="chg"></div></div>
        <div class="row"><div class="name ind"><svg class="ic"><use href="#ok"/></svg><svg class="ic"><use href="#fix"/></svg><span class="lbl">FIXED_CONTOUR_9</span></div><div class="chg"></div></div>
        <div class="row"><div class="name ind"><svg class="ic"><use href="#ok"/></svg><svg class="ic"><use href="#fix"/></svg><span class="lbl">FLOWCUT_SINGLE_3</span></div><div class="chg"></div></div>
        <div class="row"><div class="name ind"><svg class="ic"><use href="#ok"/></svg><svg class="ic"><use href="#fix"/></svg><span class="lbl">FIXED_CONTOUR_10</span></div><div class="chg"></div></div>
        <div class="row"><div class="name ind"><svg class="ic"><use href="#ok"/></svg><svg class="ic"><use href="#fix"/></svg><span class="lbl blue">FLOWCUT_SINGLE_4</span></div><div class="chg"><b class="mark"></b></div></div>
        <div class="row"><div class="name ind"><svg class="ic"><use href="#ok"/></svg><svg class="ic"><use href="#fix"/></svg><span class="lbl">FLOWCUT_SINGLE_5</span></div><div class="chg"></div></div>
        <div class="row"><div class="name ind"><svg class="ic"><use href="#ok"/></svg><svg class="ic"><use href="#fix"/></svg><span class="lbl">FLOWCUT_SINGLE_6</span></div><div class="chg"></div></div>
        <div class="row"><div class="name ind"><svg class="ic"><use href="#ok"/></svg><svg class="ic"><use href="#fix"/></svg><span class="lbl">FLOWCUT_SINGLE_7</span></div><div class="chg"></div></div>
        <div class="row"><div class="name ind"><svg class="ic"><use href="#ok"/></svg><svg class="ic"><use href="#fix"/></svg><span class="lbl">FLOWCUT_SINGLE_8</span></div><div class="chg"></div></div>
        <div class="row"><div class="name ind"><svg class="ic"><use href="#ok"/></svg><svg class="ic"><use href="#fix"/></svg><span class="lbl">FIXED_CONTOUR_11</span></div><div class="chg"></div></div>
        <div class="row"><div class="name ind"><svg class="ic"><use href="#ok"/></svg><svg class="ic"><use href="#fix"/></svg><span class="lbl">FIXED_CONTOUR_12</span></div><div class="chg"></div></div>
        <div class="row"><div class="name ind"><svg class="ic"><use href="#ok"/></svg><svg class="ic"><use href="#fix"/></svg><span class="lbl">FIXED_CONTOUR_13</span></div><div class="chg"></div></div>
        <div class="row"><div class="name ind"><svg class="ic"><use href="#ok"/></svg><svg class="ic"><use href="#fix"/></svg><span class="lbl">FIXED_CONTOUR_14</span></div><div class="chg"></div></div>
        <div class="row"><div class="name ind last"><svg class="ic"><use href="#ok"/></svg><svg class="ic"><use href="#fix"/></svg><span class="lbl">FIXED_CONTOUR_15</span></div><div class="chg"></div></div>
        <div class="row"><div class="name"></div><div class="chg"></div></div>
        <div class="row"><div class="name"></div><div class="chg"></div></div>
        <div class="row"><div class="name"></div><div class="chg"></div></div>
        <div class="hscroll"><span class="hb">&#10094;</span><span class="hthumb"><i></i></span><span class="hgap"></span><span class="hb">&#10095;</span></div>
      </div>
      <div class="splitter"><i></i></div>
      <div class="fold"><span>종속도</span><b></b></div>
      <div class="fold"><span>상세정보</span><b></b></div>
    </section>

    <section class="canvas">
      <svg class="scene" viewBox="357 187 1563 856" width="1563" height="856">
        <defs>
          <linearGradient id="yel" gradientUnits="userSpaceOnUse" x1="725" x2="1352" y1="0" y2="0">
            <stop offset="0" stop-color="#b9b900"/><stop offset=".03" stop-color="#e2e200"/><stop offset=".07" stop-color="#ffff00"/><stop offset=".96" stop-color="#ffff00"/><stop offset="1" stop-color="#d2cc00"/>
          </linearGradient>
          <linearGradient id="yel2" gradientUnits="userSpaceOnUse" x1="770" x2="840" y1="0" y2="0">
            <stop offset="0" stop-color="#c8c800"/><stop offset=".4" stop-color="#e6e600"/><stop offset="1" stop-color="#ffff00"/>
          </linearGradient>
          <linearGradient id="yel3" gradientUnits="userSpaceOnUse" x1="1200" x2="1229" y1="0" y2="0">
            <stop offset="0" stop-color="#ffff00"/><stop offset="1" stop-color="#cfcf20"/>
          </linearGradient>
        </defs>
        <path class="ln-long" d="M429 631L602 803M1648 631L1476 803"/>
        <path d="M856 498V484H1229V498H1294L1327 627L1352 657V727H725V678L747 580L769 557L794 498Z" fill="url(#yel)"/>
        <path d="M794 498L769 557H800L845 498Z" fill="url(#yel2)"/>
        <rect x="856" y="484" width="373" height="14" fill="url(#yel3)"/>
        <rect x="856" y="485" width="5" height="13" fill="#b8b800"/>
        <g class="edge">
          <path d="M856 498V484H1229V498M794 498H1294M1040 501H1296M794 498L769 557L747 580L725 678V727H1352V657M1294 498L1327 627"/>
          <path d="M961 484V498M1037 484V498M1038 498V727M725 678H1352"/>
          <path d="M769 557C775 553 785 552 794 552C880 558 960 562 1040 565C1120 570 1200 573 1263 582C1290 590 1312 605 1325 623"/>
          <path d="M776 560C782 556 790 555 796 555C880 561 960 565 1040 568C1120 574 1200 578 1255 585C1285 593 1305 610 1320 628"/>
          <path d="M747 580C850 577 960 578 1040 580C1120 583 1200 593 1267 607C1295 614 1320 625 1333 640"/>
          <path d="M756 586C850 583 960 583 1040 586C1120 589 1200 600 1262 614C1290 622 1315 632 1330 645"/>
          <path d="M747 583L727 678M756 586L740 678"/>
          <path d="M769 557L747 580M778 558L756 586"/>
        </g>
        <path class="pk-strong" d="M804 746V591H1251"/>
        <path class="pk" d="M1251 591H1493V746M1251 591V746"/>
        <path class="mag" d="M628 733H1448M1317 727V733"/>
        <path class="yl-thin" d="M601 727H1575V746M601 727V746"/>
        <path class="yl" d="M601 746.500H1575"/>
        <path class="grn" d="M725 727H1352"/>
        <g transform="translate(1200 450) scale(.33333)">
          <g class="white">
            <path d="M200 378L232 412M285 378L315 412M362 378L395 415M440 380L475 415M880 500L928 545M880 580L928 622M880 665L928 705M880 745L928 790"/>
          </g>
          <g class="blue3">
            <path d="M520 55L200 375M558 100L285 378M600 140L362 378M640 180L440 380"/>
            <path d="M750 290L470 570M790 335L555 570M805 345L620 560M820 358L700 555M860 400L765 540M890 430L780 520M880 445L830 490"/>
            <path d="M965 505L928 542M1005 545L928 622M1047 585L928 705M1090 622L928 787"/>
            <path d="M392 590L205 785"/>
            <path class="dash" d="M400 590L280 705M430 600L330 670"/>
          </g>
          <path d="M705 250L745 285L430 600L392 565Z" fill="#0a1ee8"/>
          <g class="cyan">
            <path d="M175 770L215 808M175 690L298 808M175 605L380 808M175 525L465 808M175 440L545 808M235 425L623 808M320 425L705 808M400 425L785 808M480 425L865 808M560 425L880 745M640 425L880 665M720 425L880 580M800 425L880 500"/>
          </g>
          <g class="ydash">
            <path d="M770 385L800 415M850 470L820 510M810 525L785 555M750 545L725 580M690 575L665 600M610 570L590 595M525 575L505 598M470 590L450 612"/>
          </g>
          <path class="red" d="M520 55L820 355M865 398L1090 622"/>
        </g>
        <path class="ax-z" d="M650 727V636"/>
        <path d="M650 617L644 640H656Z" fill="#0a50e0"/>
        <path d="M650 670L647 683L650 698L653 683Z" fill="#0a50e0"/>
        <path class="ax-y" d="M655 727H705"/>
        <path d="M665 726L695 724L705 727L695 730Z" fill="#2a9a3a"/>
        <path d="M740 727L755 725L765 729L745 731Z" fill="#2a9a3a"/>
        <circle cx="650" cy="727" r="3.500" fill="#c03020"/>
        <text class="lbl-b" x="656" y="616">ZM</text>
        <text class="lbl-b" x="656" y="667">ZC</text>
        <text class="lbl-r" x="652" y="727">XM</text>
        <text class="lbl-g" x="694" y="723">YC</text>
        <text class="lbl-o" x="745" y="723">YM</text>
        <rect x="429" y="946" width="25" height="25" fill="#dddddd" stroke="#cfcfcf"/>
        <path class="ax-z2" d="M425.500 970V942"/>
        <path d="M425.500 928L421 945H430Z" fill="#0a50e0"/>
        <path class="ax-y2" d="M430 974H460"/>
        <path d="M472 974L455 969V979Z" fill="#2a9a3a"/>
        <circle cx="425.500" cy="974" r="3.500" fill="#b82a2a"/>
        <text class="lbl-b2" x="422" y="927">Z</text>
        <text class="lbl-g2" x="473" y="978">Y</text>
      </svg>
      <div class="imehint">한/영 전환</div>
    </section>
  </div>

  <footer class="bottombar">
    <i class="dots w8"></i>
    <i class="ti w30 active"><svg><use href="#tree2"/></svg></i>
    <i class="ti w30"><svg><use href="#mill2"/></svg></i>
    <i class="ti w31"><svg><use href="#cube2"/></svg></i>
    <i class="ti w30"><svg><use href="#fix2"/></svg></i><i class="ar low w14"></i>
    <i class="dots w14"></i>
    <i class="ti w28"><svg><use href="#mult"/></svg></i><i class="ar w13"></i>
    <i class="ti w30"><svg><use href="#cross"/></svg></i><i class="ar w14"></i>
    <i class="ti w28"><svg><use href="#poly"/></svg></i><i class="ar w13"></i>
    <i class="ti w30"><svg><use href="#cylb"/></svg></i>
    <i class="ti w30"><svg><use href="#cubeb"/></svg></i>
    <i class="ti w32"><svg><use href="#wire"/></svg></i><i class="ar w14"></i><i class="ar low w8"></i>
  </footer>
</div>
</body>
</html>
```

FILE: styles.css
```css
* { box-sizing: border-box; }
html, body { margin: 0; padding: 0; }
body {
  font-family: "Liberation Sans", "Noto Sans CJK KR", sans-serif;
  font-size: 12px;
  color: #222;
  background: #ccc;
}
.sprite { position: absolute; width: 0; height: 0; overflow: hidden; }
.app { width: 1920px; height: 1078px; display: flex; flex-direction: column; overflow: hidden; }

/* title */
.titlebar {
  height: 26px; flex: none; display: flex; align-items: center; padding: 0 4px 0 3px;
  background: linear-gradient(#4a4a4a 0, #8c8c8c 2px, #5a5a5a 8px, #131313 10px, #0d0d0d 100%);
  color: #fff; position: relative;
}
.tlogo { width: 19px; height: 19px; }
.ttext { font-size: 14px; font-weight: bold; margin-left: 2px; letter-spacing: .95px; white-space: nowrap; }
.siemens { margin-left: auto; font-size: 13.5px; font-weight: bold; letter-spacing: .4px; margin-right: 25px; padding-top: 3px; }
.winbtns { display: flex; gap: 3px; }
.wb { width: 20px; height: 20px; border: 1px solid #555; border-radius: 3px; background: linear-gradient(#666, #333); color: #fff; font-size: 10px; text-align: center; line-height: 18px; }
.wbclose { background: linear-gradient(#f08a70, #d84a28); border-color: #a03a20; font-weight: bold; }

/* menu */
.menubar {
  height: 26px; flex: none; display: flex; align-items: center; gap: 13px; padding-left: 8px;
  background: linear-gradient(#ececec, #e2e2e2); border-bottom: 2px solid #cfcfcf;
}
.menubar > span { font-size: 12px; color: #333; letter-spacing: -.1px; }
.mlogo { width: 18px; height: 18px; margin-right: -9px; }
.mdibtns { margin-left: auto; display: flex; gap: 2px; margin-right: 5px; }
.mb { width: 17px; height: 17px; border: 1px solid #aaa; border-radius: 3px; background: #f4f4f4; color: #444; font-size: 10px; text-align: center; line-height: 14px; }

/* toolbars */
.tools { height: 69px; flex: none; background: linear-gradient(#e4e4e4, #cdcdcd); border-bottom: 1px solid #8f8f8f; }
.tbar { display: flex; align-items: center; height: 34px; }
.tbar1 { width: 1132px; height: 35px; }
.tbar2 { width: 1192px; border-top: 1px solid #f0f0f0; background: #d6d6d6; }
.ti { display: flex; align-items: center; justify-content: center; flex: none; height: 30px; }
.ti svg { width: 24px; height: 24px; }
.ti.sm svg { width: 18px; height: 18px; }
.ti.faded { opacity: .55; }
.ti.active { background: #fdfdfd; border: 1px solid #777; border-radius: 3px; }
.ar { flex: none; height: 30px; display: flex; align-items: center; justify-content: center; }
.ar::after { content: ""; border: 3px solid transparent; border-top: 4px solid #222; border-bottom: 0; }
.ar.low { align-items: flex-end; padding-bottom: 3px; }
.sep { flex: none; height: 30px; position: relative; }
.sep::after { content: ""; position: absolute; left: 50%; top: 0; bottom: 0; border-left: 1px solid #f4f4f4; }
.dots { flex: none; height: 28px; position: relative; }
.dots::after { content: ""; position: absolute; left: 4px; top: 0; bottom: 0; border-left: 2px dotted #a0a0a0; }
.tlabel { flex: none; font-size: 12px; color: #222; white-space: nowrap; letter-spacing: .3px; }
.tlabel.start { padding-left: 6px; letter-spacing: 0; }
.w3 { width: 3px; } .w4 { width: 4px; } .w5 { width: 5px; } .w6 { width: 6px; } .w7 { width: 7px; } .w8 { width: 8px; } .w9 { width: 9px; }
.w10 { width: 10px; } .w11 { width: 11px; } .w12 { width: 12px; } .w13 { width: 13px; } .w14 { width: 14px; } .w15 { width: 15px; } .w16 { width: 16px; }
.w22 { width: 22px; } .w23 { width: 23px; } .w26 { width: 26px; } .w27 { width: 27px; } .w28 { width: 28px; }
.w30 { width: 30px; } .w31 { width: 31px; } .w32 { width: 32px; } .w33 { width: 33px; } .w34 { width: 34px; } .w36 { width: 36px; } .w66 { width: 66px; }

/* selection bar */
.selbar {
  height: 31px; flex: none; display: flex; align-items: center; padding: 0 0 1px 6px;
  background: linear-gradient(#cfcfcf, #e4e4e4); border-bottom: 1px solid #fff; position: relative;
}
.combo { height: 19px; display: flex; align-items: center; justify-content: space-between; background: #fff; border: 1px solid #6a6a6a; border-radius: 3px; font-size: 12.5px; padding-left: 1px; color: #111; flex: none; letter-spacing: .25px; }
.combo1 { width: 142px; margin-right: 9px; }
.combo2 { width: 149px; margin-right: 4px; }
.cbtn { width: 17px; height: 17px; background: linear-gradient(#cfe0f4, #7ba8da); display: flex; align-items: center; justify-content: center; border-radius: 2px; }
.cbtn::after { content: ""; border: 5px solid transparent; border-top: 6px solid #111; border-bottom: 0; }
.selbar .ti, .selbar .ar, .selbar .sep { height: 24px; }
.endarrow { position: absolute; right: 6px; top: 18px; height: 8px; }
.selbar .endarrow { height: 8px; }

/* status */
.status { height: 20px; flex: none; display: flex; align-items: center; padding-left: 924px; background: linear-gradient(#e6e6e6, #dcdcdc); border-bottom: 1px solid #8a8a8a; }
.smsg { font-size: 12.5px; font-weight: bold; color: #111; letter-spacing: .8px; }
.svline { width: 20px; height: 19px; border-left: 2px solid #f2f2f2; }
.svline:first-of-type { margin-left: auto; }
.sicon { width: 18px; height: 18px; margin: 0 3px 0 17px; }

/* strip with tab scroller */
.strip { height: 15px; flex: none; padding-left: 37px; position: relative; z-index: 3; background: linear-gradient(#cfcfcf 0, #d8d8d8 5px, #b9b9b9 6px, #f6f6f6 8px, #f4f4f4 12px, #6a6a6a 14px); }
.tabscroll { display: flex; height: 22px; width: 116px; }
.tsb { width: 21px; height: 22px; flex: none; background: #efefef; border: 1px solid #aaa; color: #555; font-size: 12px; font-weight: bold; text-align: center; line-height: 20px; }
.tsthumb { width: 74px; height: 14px; margin-top: 1px; background: linear-gradient(#777, #111 45%, #0c0c0c); }

/* main */
.main { flex: 1; display: flex; min-height: 0; }
.rail { width: 33px; flex: none; padding-top: 18px; background: #b0b0b0; box-shadow: inset -3px 0 3px -1px #8c8c8c; display: flex; flex-direction: column; align-items: flex-end; gap: 2px; }
.tab { width: 26px; height: 40px; flex: none; background: linear-gradient(90deg, #d2d2d2, #e2e2e2); border: 1px solid #8f8f8f; border-right: 0; border-radius: 4px 0 0 4px; display: flex; align-items: center; justify-content: center; overflow: hidden; }
.tab svg { width: 24px; height: 28px; flex: none; }
.tab.active { width: 29px; background: #f8f8f8; border-color: #ccc; }
.g15 { margin-top: 13px; } .g13 { margin-top: 11px; } .g14 { margin-top: 12px; }

.panel { width: 324px; flex: none; background: #f6f6f6; border-right: 1px solid #8a8a8a; padding: 0 10px 0 9px; display: flex; flex-direction: column; }
.ptitle { height: 36px; flex: none; display: flex; align-items: center; padding: 4px 0 0 3px; font-size: 13px; font-weight: bold; color: #111; letter-spacing: .75px; white-space: nowrap; }
.ptitle svg { width: 16px; height: 16px; margin-right: 11px; }
.table { width: 303px; height: 755px; flex: none; margin-left: 1px; border: 1px solid #666; background: #fff; display: flex; flex-direction: column; }
.thead { height: 19px; flex: none; display: flex; background: linear-gradient(#fafafa, #dcdcdc); font-size: 12px; color: #333; line-height: 19px; }
.th1 { width: 199px; padding-left: 6px; border-right: 1px solid #888; }
.th2 { flex: 1; padding-left: 7px; letter-spacing: .4px; }
.row { height: 20px; flex: none; display: flex; border-bottom: 1px solid #f1f1f1; }
.name { width: 199px; height: 19px; flex: none; display: flex; align-items: center; padding-top: 1px; }
.root { padding-left: 4px; font-size: 11.5px; color: #333; }
.ind {
  padding-left: 18px;
  background:
    repeating-linear-gradient(90deg, #b8b8b8 0 1px, transparent 1px 2px) 10px 10px / 8px 1px no-repeat,
    repeating-linear-gradient(#c8c8c8 0 1px, transparent 1px 2px) 9px 0 / 1px 21px no-repeat;
}
.ind.last { background:
    repeating-linear-gradient(90deg, #b8b8b8 0 1px, transparent 1px 2px) 10px 10px / 8px 1px no-repeat,
    repeating-linear-gradient(#c8c8c8 0 1px, transparent 1px 2px) 9px 0 / 1px 10px no-repeat;
}
.ic { width: 16px; height: 16px; flex: none; margin-right: 1px; }
.lbl { margin-left: 2px; font-size: 11.5px; color: #333; white-space: nowrap; }
.lbl.tight { font-size: 12px; letter-spacing: .5px; margin-left: 3px; }
.lbl.blue { color: #5a82b8; }
.chg { flex: 1; border-left: 1px solid #000; padding-left: 10px; display: flex; align-items: center; margin-bottom: -1px; }
.mark { display: block; width: 7px; height: 13px; background: repeating-linear-gradient(#4c4ca8 0 3px, #8c8ce0 3px 4px); border: 1px solid #3a3a90; }
.row.selected { background: linear-gradient(90deg, #fff 51px, #b6b6c4 51px); }
.row.selected .name, .row.selected .chg { border-top: 1px dotted #444; border-bottom: 1px dotted #444; height: 20px; margin-bottom: 0; }
.hscroll { height: 15px; flex: none; display: flex; align-items: stretch; padding: 0 1px; background: #fff; }
.hb { width: 16px; flex: none; background: #ececec; border: 1px solid #aaa; font-size: 10px; font-weight: bold; color: #222; text-align: center; line-height: 13px; }
.hthumb { width: 87px; flex: none; margin-left: 1px; background: linear-gradient(#e6e6ee, #c6c6ce); border: 1px solid #aab; display: flex; align-items: center; justify-content: center; }
.hthumb i { width: 7px; height: 7px; background: repeating-linear-gradient(90deg, #888 0 1px, transparent 1px 2px); }
.hgap { flex: 1; }
.splitter { height: 13px; flex: none; position: relative; }
.splitter::before { content: ""; position: absolute; left: 0; right: 0; top: 7px; border-top: 1px solid #ddd; }
.splitter i { position: absolute; left: 126px; top: 5px; width: 54px; height: 5px; background: linear-gradient(#ccc, #ddd); border-right: 1px solid #888; }
.fold { height: 22px; flex: none; margin-bottom: 1px; width: 304px; display: flex; align-items: center; justify-content: space-between; padding-left: 7px; background: linear-gradient(#fafafa 50%, #d4d4d4); font-size: 13px; font-weight: bold; color: #111; letter-spacing: 1.1px; }
.fold b { width: 24px; height: 22px; border-left: 1px solid #aaa; position: relative; }
.fold b::after { content: ""; position: absolute; left: 6px; top: 4px; width: 8px; height: 8px; border-right: 3px solid #666; border-bottom: 3px solid #666; transform: rotate(45deg); }

/* graphics */
.canvas { flex: 1; position: relative; background: linear-gradient(#bcbcbc 0, #d2d2d2 31%, #eeeeee 68%, #f0f0f0 100%); }
.scene { position: absolute; left: 0; top: 0; display: block; }
.ln-long { stroke: #3c62a8; stroke-width: 1.6; fill: none; }
.edge path { fill: none; stroke: #55551a; stroke-width: .8; }
.pk-strong { fill: none; stroke: #c8509c; stroke-width: 1.6; }
.pk { fill: none; stroke: #f29aa8; stroke-width: 1.4; }
.mag { fill: none; stroke: #c038c0; stroke-width: 1.4; }
.yl-thin { fill: none; stroke: #e6e088; stroke-width: 1; }
.yl { fill: none; stroke: #d6e020; stroke-width: 2; }
.grn { fill: none; stroke: #3a7a30; stroke-width: 1; }
.white path { stroke: #fff; stroke-width: 9; fill: none; }
.blue3 path { stroke: #0a14d0; stroke-width: 7; fill: none; }
.blue3 .dash { stroke-width: 12; stroke-dasharray: 30 14; }
.cyan path { stroke: #18e0e0; stroke-width: 7; fill: none; }
.ydash path { stroke: #f4e428; stroke-width: 9; fill: none; }
.red { stroke: #f01010; stroke-width: 8; fill: none; }
.ax-z { stroke: #0a50e0; stroke-width: 3; }
.ax-y { stroke: #3aa040; stroke-width: 1.6; }
.ax-z2 { stroke: #2a66d8; stroke-width: 2; }
.ax-y2 { stroke: #2a9a3a; stroke-width: 2; }
.scene text { font-family: "Liberation Sans", sans-serif; font-size: 12px; }
.lbl-b { fill: #3f63b4; }
.lbl-r { fill: #d84a3a; }
.lbl-g { fill: #6f8a7a; }
.lbl-o { fill: #96a82c; }
.lbl-b2 { fill: #3f63b4; }
.lbl-g2 { fill: #778; }
.imehint { position: absolute; z-index: 4; left: 1283px; top: 846px; width: 64px; height: 18px; border: 1px solid #111; background: #f0f0f0; font-size: 12px; text-align: center; line-height: 15px; color: #111; white-space: nowrap; }

/* bottom */
.bottombar { height: 35px; flex: none; display: flex; align-items: center; background: linear-gradient(#ededed, #c8c8c8); }
.bottombar .ti { height: 31px; }
.bottombar .ti svg { width: 26px; height: 26px; }
```
